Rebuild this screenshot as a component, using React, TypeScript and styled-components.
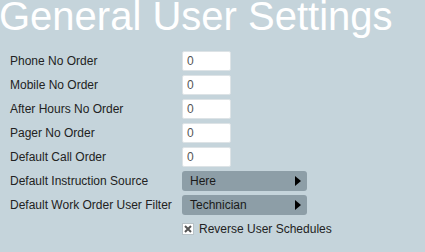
import React from "react";
import styled, { createGlobalStyle } from "styled-components";

const GlobalStyle = createGlobalStyle`
  html, body {
    margin: 0;
    padding: 0;
    background: #c5d4db;
    font-family: "Liberation Sans", Arial, sans-serif;
  }
`;

const Page = styled.div`
  width: 425px;
  height: 252px;
  overflow: hidden;
  background: #c5d4db;
`;

const Title = styled.h1`
  margin: -4px 0 0 -1px;
  font-size: 40px;
  line-height: 40px;
  font-weight: 400;
  color: #fff;
  white-space: nowrap;
`;

const Form = styled.div`
  display: grid;
  grid-template-columns: 172px auto;
  grid-auto-rows: 24px;
  align-items: center;
  padding: 13px 0 0 10px;
`;

const Label = styled.div`
  font-size: 12px;
  color: #222;
  white-space: nowrap;
`;

const Field = styled.input`
  box-sizing: border-box;
  width: 49px;
  height: 20px;
  margin: 0;
  padding: 0 4px;
  border: 1px solid #dde3e6;
  border-radius: 2px;
  background: #fff;
  font-family: "Liberation Sans", Arial, sans-serif;
  font-size: 12px;
  color: #555;
  outline: none;
`;

const Select = styled.div`
  box-sizing: border-box;
  width: 125px;
  height: 20px;
  display: flex;
  align-items: center;
  justify-content: space-between;
  padding: 0 6px 0 8px;
  background: #8d9ea7;
  border-radius: 3px;
  font-size: 12px;
  color: #1a1a1a;
`;

const Arrow = styled.span`
  width: 0;
  height: 0;
  border-top: 5px solid transparent;
  border-bottom: 5px solid transparent;
  border-left: 6px solid #000;
`;

const CheckRow = styled.label`
  grid-column: 2;
  display: flex;
  align-items: center;
  gap: 5px;
  font-size: 12px;
  color: #222;
`;

const Box = styled.span`
  box-sizing: border-box;
  width: 12px;
  height: 12px;
  display: flex;
  align-items: center;
  justify-content: center;
  background: #fff;
  border: 1px solid #b8c2c7;
`;

const numberRows = [
  "Phone No Order",
  "Mobile No Order",
  "After Hours No Order",
  "Pager No Order",
  "Default Call Order",
];

const selectRows = [
  { label: "Default Instruction Source", value: "Here" },
  { label: "Default Work Order User Filter", value: "Technician" },
];

export default function App() {
  return (
    <Page>
      <GlobalStyle />
      <Title>General User Settings</Title>
      <Form>
        {numberRows.map((l) => (
          <React.Fragment key={l}>
            <Label>{l}</Label>
            <Field defaultValue="0" />
          </React.Fragment>
        ))}
        {selectRows.map((r) => (
          <React.Fragment key={r.label}>
            <Label>{r.label}</Label>
            <Select>
              {r.value}
              <Arrow />
            </Select>
          </React.Fragment>
        ))}
        <CheckRow>
          <Box>
            <svg width="8" height="8" viewBox="0 0 8 8">
              <path d="M1 1L7 7M7 1L1 7" stroke="#555" strokeWidth="2" />
            </svg>
          </Box>
          Reverse User Schedules
        </CheckRow>
      </Form>
    </Page>
  );
}
